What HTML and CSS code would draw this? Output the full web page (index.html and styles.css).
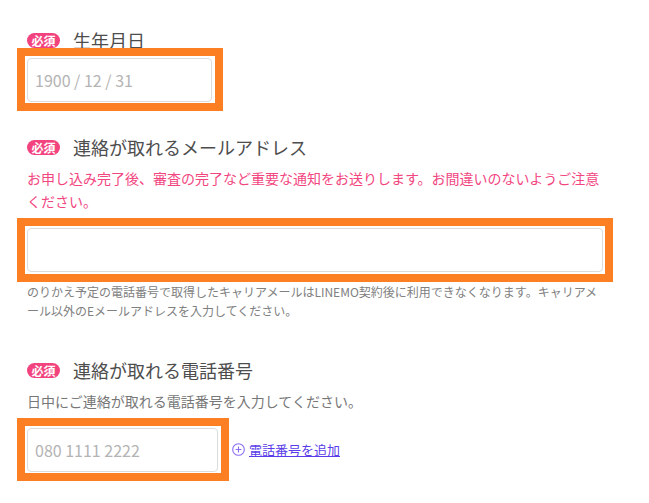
FILE: index.html
```html
<!DOCTYPE html>
<html lang="ja">

<head>
    <meta charset="UTF-8">
    <title>お客さま情報</title>
    <link rel="stylesheet" href="styles.css">
</head>

<body>
    <div class="form-container">
        <div class="section">
            <div class="field-label tight"><span class="badge">必須</span>生年月日</div>
            <div class="highlight">
                <input class="text-input birth" type="text" placeholder="1900 / 12 / 31">
            </div>
        </div>

        <div class="section">
            <div class="field-label"><span class="badge">必須</span>連絡が取れるメールアドレス</div>
            <p class="notice">お申し込み完了後、審査の完了など重要な通知をお送りします。お間違いのないようご注意ください。</p>
            <div class="highlight wide">
                <input class="text-input email" type="email">
            </div>
            <p class="note">のりかえ予定の電話番号で取得したキャリアメールはLINEMO契約後に利用できなくなります。キャリアメール以外のEメールアドレスを入力してください。</p>
        </div>

        <div class="section">
            <div class="field-label"><span class="badge">必須</span>連絡が取れる電話番号</div>
            <p class="desc">日中にご連絡が取れる電話番号を入力してください。</p>
            <div class="phone-row">
                <div class="highlight">
                    <input class="text-input phone" type="tel" placeholder="080 1111 2222">
                </div>
                <a class="add-link" href="#">
                    <svg width="13" height="13" viewBox="0 0 13 13">
                        <circle cx="6.5" cy="6.5" r="5.8" fill="none" stroke="#8a6cf2" stroke-width="1.1"/>
                        <path d="M6.5 3.6v5.8M3.6 6.5h5.8" stroke="#8a6cf2" stroke-width="1.1"/>
                    </svg>
                    <span>電話番号を追加</span>
                </a>
            </div>
        </div>
    </div>
</body>

</html>
```

FILE: styles.css
```css
body {
    margin: 0;
    background: #fff;
    color: #4d4d4d;
    font-family: "Noto Sans CJK JP", "Noto Sans", sans-serif;
}

.form-container {
    width: 576px;
    padding: 30px 0 0 27px;
}

.section {
    margin-bottom: 26px;
}

.section:nth-child(2) {
    margin-bottom: 40px;
}

.field-label {
    display: flex;
    align-items: center;
    height: 20px;
    font-size: 18px;
    line-height: 20px;
    margin-bottom: 10px;
}

.field-label.tight {
    margin-bottom: -2px;
}

.badge {
    display: inline-block;
    width: 33px;
    height: 15px;
    margin-right: 13px;
    border-radius: 8px;
    background: #f2437e;
    color: #fff;
    font-size: 12px;
    font-weight: bold;
    line-height: 15px;
    text-align: center;
}

.notice {
    margin: 0 0 5px;
    color: #f2467f;
    font-size: 14px;
    line-height: 23px;
}

.desc {
    margin: 0 0 5px;
    color: #777;
    font-size: 14px;
    line-height: 23px;
}

.note {
    margin: 0;
    color: #808080;
    font-size: 12px;
    line-height: 19px;
}

.highlight {
    display: inline-block;
    margin-left: -10px;
    padding: 2px 3px 1px 2px;
    border: 8px solid #fd7f24;
}

.highlight.wide {
    display: block;
    width: 576px;
    padding: 2px;
}

.text-input {
    box-sizing: border-box;
    display: block;
    height: 44px;
    padding: 0 7px;
    border: 1px solid #dcdcdc;
    border-radius: 4px;
    font-family: "Noto Sans CJK JP", sans-serif;
    font-size: 16px;
    color: #333;
}

.text-input::placeholder {
    color: #b4b4b4;
}

.birth {
    width: 185px;
}

.email {
    width: 576px;
}

.phone {
    width: 191px;
}

.phone-row {
    display: flex;
    align-items: center;
}

.add-link {
    display: flex;
    align-items: center;
    gap: 4px;
    margin-left: 3px;
    color: #5a3de8;
    font-size: 13px;
    text-decoration: none;
}

.add-link span {
    text-decoration: underline;
}
```
